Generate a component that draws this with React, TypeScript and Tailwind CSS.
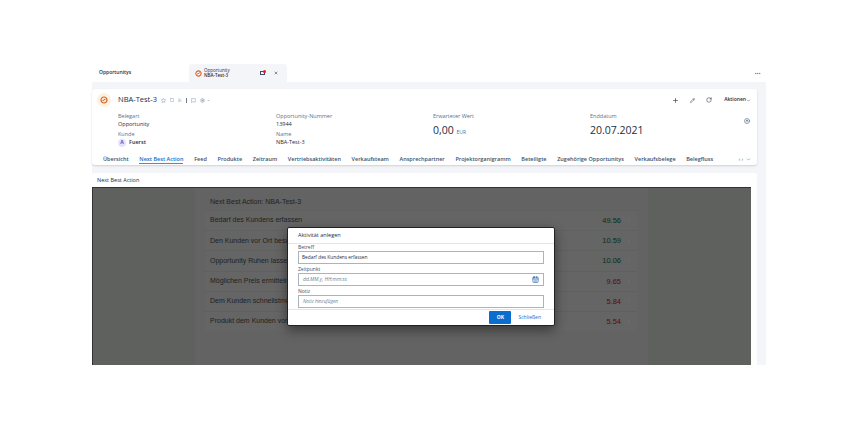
import { Plus, Pencil, RotateCw, ChevronDown, ChevronRight, Star, Square, Rss, MessageSquare, Settings, X, Ellipsis, CalendarDays, CircleArrowUp } from "lucide-react";

const tabs = [
  ["Übersicht", 0],
  ["Next Best Action", 1],
  ["Feed", 0],
  ["Produkte", 0],
  ["Zeitraum", 0],
  ["Vertriebsaktivitäten", 0],
  ["Verkaufsteam", 0],
  ["Ansprechpartner", 0],
  ["Projektorganigramm", 0],
  ["Beteiligte", 0],
  ["Zugehörige Opportunitys", 0],
  ["Verkaufsbelege", 0],
  ["Belegfluss", 0],
] as const;

// die Texte sind im Bild vom Dialog abgeschnitten
const rows = [
  ["Bedarf des Kundens erfassen", "49.56", "text-[#0a2f18]"],
  ["Den Kunden vor Ort besuc", "10.59", "text-[#0a2f18]"],
  ["Opportunity Ruhen lassen", "10.06", "text-[#0a2f18]"],
  ["Möglichen Preis ermitteln u", "9.65", "text-[#5a0c0c]"],
  ["Dem Kunden schnellstmög", "5.84", "text-[#5a0c0c]"],
  ["Produkt dem Kunden vorst", "5.54", "text-[#5a0c0c]"],
];

function OrangeIcon({ size }: { size: number }) {
  return (
    <svg width={size} height={size} viewBox="0 0 16 16" fill="none">
      <circle cx="8" cy="8" r="6" stroke="#d9661f" strokeWidth="2.4" />
      <path d="M5 9.5 L8 8 L11 6" stroke="#7a3a10" strokeWidth="1.6" />
    </svg>
  );
}

function Field({ label, value }: { label: string; value: string }) {
  return (
    <div className="flex flex-col">
      <span className="text-[5.5px] leading-[8px] text-[#5b738b]">{label}</span>
      <span className="text-[5.5px] leading-[8px] text-[#1d2d3e]">{value}</span>
    </div>
  );
}

export default function App() {
  return (
    <div className="h-[425px] w-[850px] overflow-hidden bg-white font-['Open_Sans',sans-serif]">
      <div className="h-[64px]" />
      <div className="ml-[92px] w-[674px]">
        {/* Tab-Leiste */}
        <div className="flex h-[18px] items-center pr-[5px]">
          <span className="ml-[7px] w-[90px] text-[5px] font-semibold text-[#1d2d3e]">Opportunitys</span>
          <div className="flex h-[18px] w-[98px] items-center rounded-t-[3px] bg-[#f3f5f9] pl-[6px] pr-[9px]">
            <OrangeIcon size={7} />
            <div className="ml-[2px] flex flex-1 flex-col text-[4.5px] leading-[5px] text-[#1d2d3e]">
              <span>Opportunity</span>
              <span className="font-semibold">NBA-Test-3</span>
            </div>
            <span className="relative h-[4px] w-[5px] border border-[#3b5068]">
              <span className="absolute -right-[2px] -top-[2px] h-[3px] w-[3px] rounded-full bg-[#d22]" />
            </span>
            <X size={4} strokeWidth={3} className="ml-[9px] text-[#1d2d3e]" />
          </div>
          <Ellipsis size={7} className="ml-auto text-[#556b82]" />
        </div>

        <div className="h-[283px] bg-[#f3f5f9] pr-[9px] pt-[7px]">
          {/* Kopfbereich */}
          <div className="h-[76px] overflow-hidden rounded-[3px] bg-white shadow-[0_1px_2px_rgba(0,0,0,0.15)]">
            <div className="flex h-[22px] items-center pl-[5px] pr-[6px]">
              <div className="flex h-[14px] w-[14px] items-center justify-center rounded-full bg-[#fdf1df]">
                <OrangeIcon size={8} />
              </div>
              <span className="ml-[7px] text-[7.5px] text-[#1d2d3e]">NBA-Test-3</span>
              <div className="ml-[4px] flex items-center gap-[4px] text-[#6a7f95]">
                <Star size={5} />
                <Square size={4} />
                <Rss size={4} />
                <span className="h-[5px] w-px bg-[#6a7f95]" />
                <MessageSquare size={5} />
                <Settings size={5} />
                <ChevronDown size={3} strokeWidth={4} className="-ml-[2px]" />
              </div>
              <div className="ml-auto flex items-center text-[#1d2d3e]">
                <Plus size={7} />
                <Pencil size={5} className="ml-[11px]" />
                <RotateCw size={6} className="ml-[11px]" />
                <span className="ml-[12px] text-[5px] font-semibold">Aktionen</span>
                <ChevronDown size={5} />
              </div>
            </div>
            <div className="flex h-[36px] pl-[26px] pt-[1px]">
              <div className="flex w-[158px] flex-col gap-[2px]">
                <Field label="Belegart" value="Opportunity" />
                <div className="flex flex-col">
                  <span className="text-[5.5px] leading-[8px] text-[#5b738b]">Kunde</span>
                  <div className="flex h-[9px] items-center gap-[3px]">
                    <span className="flex h-[8px] w-[8px] items-center justify-center rounded-full bg-[#e5e3fb] text-[5px] font-bold text-[#5a4fc4]">A</span>
                    <span className="text-[5.5px] font-semibold text-[#1d2d3e]">Fuerst</span>
                  </div>
                </div>
              </div>
              <div className="flex w-[157px] flex-col gap-[2px]">
                <Field label="Opportunity-Nummer" value="13944" />
                <Field label="Name" value="NBA-Test-3" />
              </div>
              <div className="w-[157px]">
                <span className="block text-[5.5px] leading-[8px] text-[#5b738b]">Erwarteter Wert</span>
                <span className="mt-[2px] block text-[10.5px] leading-[16px] text-[#1d2d3e]">
                  0,00 <span className="text-[5px] text-[#5b738b]">EUR</span>
                </span>
              </div>
              <div className="flex-1">
                <span className="block text-[5.5px] leading-[8px] text-[#5b738b]">Enddatum</span>
                <span className="mt-[2px] block text-[10.5px] leading-[16px] text-[#1d2d3e]">20.07.2021</span>
              </div>
              <CircleArrowUp size={6} className="mr-[7px] mt-[6px] text-[#2a4a70]" />
            </div>
            <div className="mt-[5px] flex h-[12px] items-end gap-[10.7px] pl-[11px]">
              {tabs.map(([t, active]) => (
                <span
                  key={t}
                  className={
                    active
                      ? "border-b-[1.5px] border-[#1aa6c4] text-[5.5px] font-semibold leading-[8px] text-[#0a6ed1]"
                      : "border-b-[1.5px] border-transparent text-[5.5px] font-semibold leading-[8px] text-[#3b5068]"
                  }
                >
                  {t}
                </span>
              ))}
              <span className="ml-auto mr-[6px] flex items-center gap-[3px] border-b-[1.5px] border-transparent text-[5px] leading-[8px] text-[#3b5068]">
                ‹ ›<ChevronDown size={5} />
              </span>
            </div>
          </div>

          {/* Inhalt */}
          <div className="relative mt-[8px] h-[192px] rounded-t-[3px] bg-white">
            <div className="flex h-[14px] items-center pl-[5px] text-[5.5px] text-[#1d2d3e]">Next Best Action</div>
            <div className="mr-[6px] h-[178px] border-l border-t border-[#333] bg-[#5f615f]">
              <div className="ml-[102px] h-full w-[453px] bg-[#626362] pl-[10px] pr-[11px] pt-[8px] font-['Liberation_Sans',sans-serif]">
                <div className="h-[14px] pl-[5px] text-[7px] leading-[12px] text-[#222]">Next Best Action: NBA-Test-3</div>
                {rows.map(([name, score, color]) => (
                  <div key={score} className="flex h-[20.2px] items-center border-t border-[#5f615f] bg-[#646564] pl-[5px] text-[7px] text-[#222]">
                    <span>{name}</span>
                    <span className={"ml-auto text-[7.5px] " + color}>{score}</span>
                    <ChevronRight size={6} className="ml-[5px] mr-[5px] text-[#777]" />
                  </div>
                ))}
              </div>
            </div>

            {/* Dialog */}
            <div className="absolute left-[195px] top-[54px] h-[99px] w-[268px] rounded-[2px] border border-[#222] bg-white shadow-[0_4px_12px_rgba(0,0,0,0.45)]">
              <div className="flex h-[16px] items-center border-b border-[#e5e5e5] pl-[10px] text-[5.5px] text-[#1d2d3e]">Aktivität anlegen</div>
              <div className="px-[10px]">
                <div className="text-[5px] leading-[7px] text-[#3b5068]">Betreff</div>
                <div className="flex h-[13px] items-center border border-b-[1.5px] border-[#a9b4be] pl-[3px] text-[4.8px] text-[#1d2d3e]">Bedarf des Kundens erfassen</div>
                <div className="mt-[2px] text-[5px] leading-[7px] text-[#3b5068]">Zeitpunkt</div>
                <div className="flex h-[13px] items-center justify-between border border-b-[1.5px] border-[#a9b4be] px-[4px] text-[5px] italic text-[#6a7f95]">
                  dd.MM.y, HH:mm:ss
                  <CalendarDays size={7} className="text-[#0a4f9e]" />
                </div>
                <div className="mt-[2px] text-[5px] leading-[7px] text-[#3b5068]">Notiz</div>
                <div className="flex h-[13px] items-center border border-b-[1.5px] border-[#a9b4be] pl-[4px] text-[4.7px] italic text-[#6a7f95]">Notiz hinzufügen</div>
              </div>
              <div className="mt-[1px] flex h-[16px] items-center border-t border-[#e5e5e5] pr-[13px]">
                <span className="ml-auto flex h-[13px] w-[22px] items-center justify-center rounded-[1px] bg-[#0a6ed1] text-[5px] font-bold text-white">OK</span>
                <span className="ml-[7px] text-[5px] text-[#0a6ed1]">Schließen</span>
              </div>
            </div>
          </div>
        </div>
      </div>
    </div>
  );
}
